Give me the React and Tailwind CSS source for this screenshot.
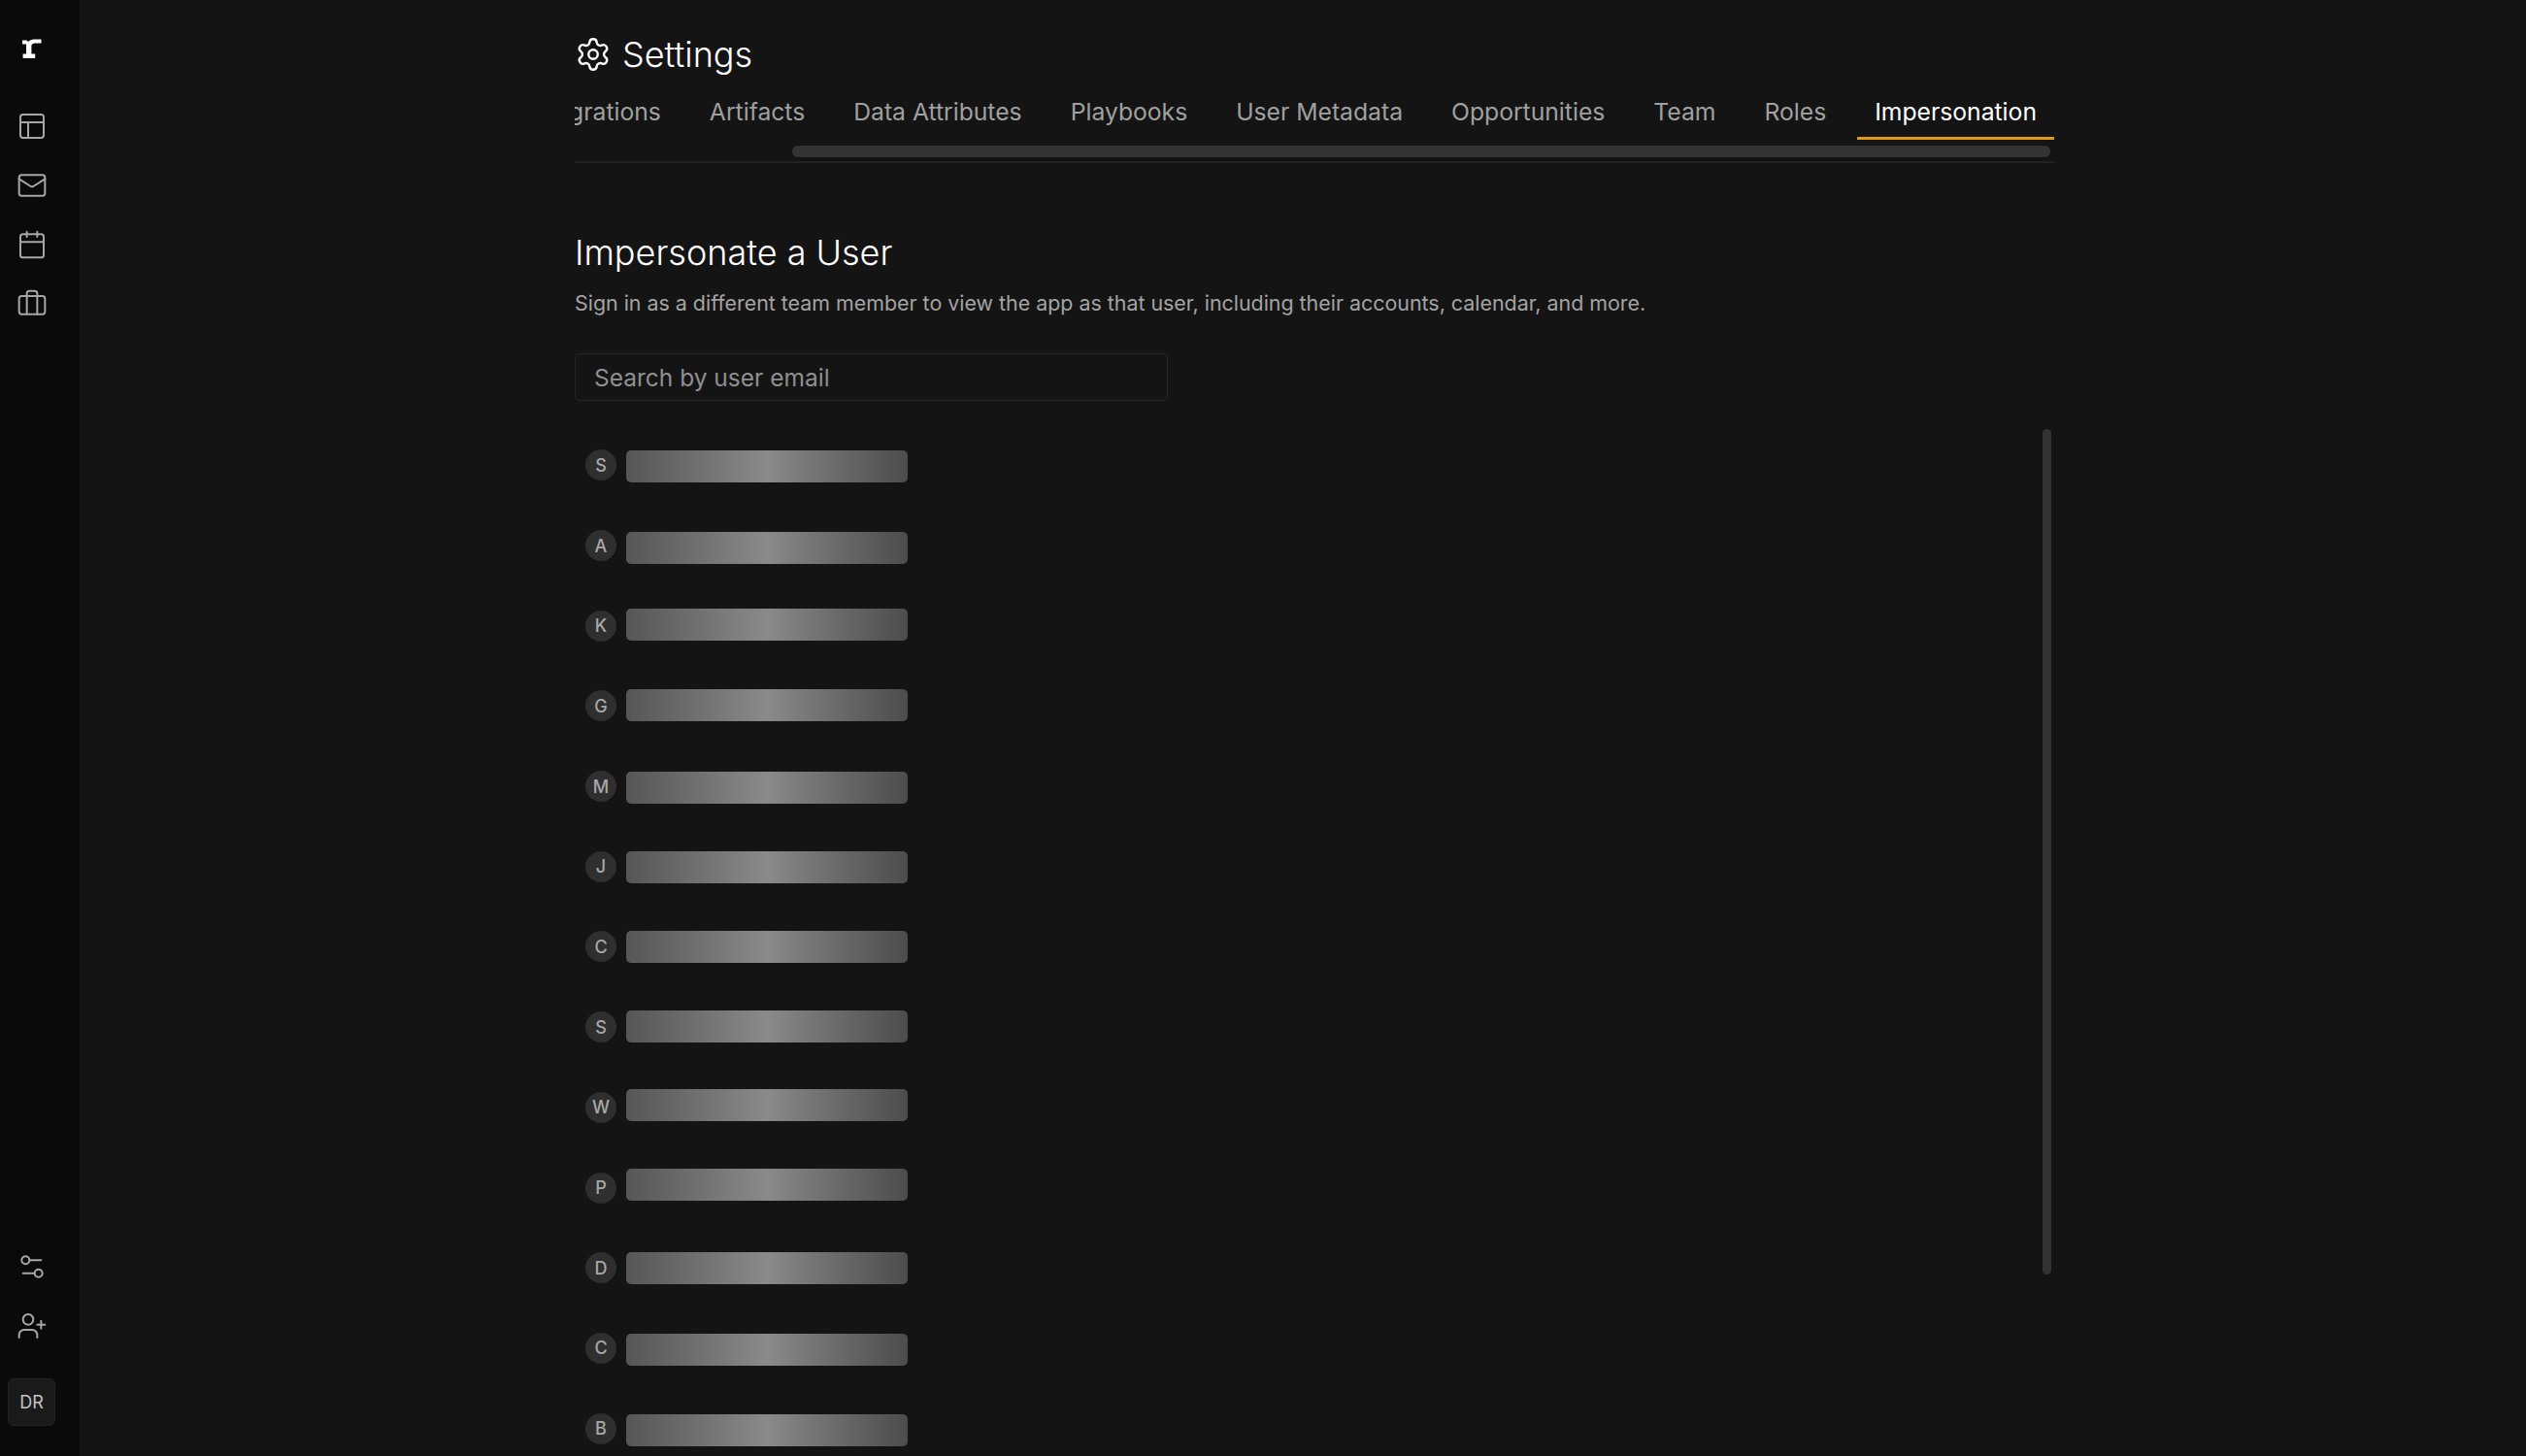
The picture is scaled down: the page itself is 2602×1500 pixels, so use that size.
import React from 'react';
import { PanelsTopLeft, Mail, Calendar, Briefcase, Settings2, UserPlus, Settings } from 'lucide-react';
import clsx from 'clsx';

const tabs = ['Integrations', 'Artifacts', 'Data Attributes', 'Playbooks', 'User Metadata', 'Opportunities', 'Team', 'Roles', 'Impersonation'];

const users = [
  { letter: 'S', shift: 'translate-y-[1px]' },
  { letter: 'A', shift: 'translate-y-[2px]' },
  { letter: 'K', shift: 'translate-y-[-1px]' },
  { letter: 'G', shift: 'translate-y-[-1px]' },
  { letter: 'M', shift: 'translate-y-[1px]' },
  { letter: 'J', shift: 'translate-y-[1px]' },
  { letter: 'C', shift: 'translate-y-0' },
  { letter: 'S', shift: 'translate-y-[-1px]' },
  { letter: 'W', shift: 'translate-y-[-2px]' },
  { letter: 'P', shift: 'translate-y-[-3px]' },
  { letter: 'D', shift: 'translate-y-0' },
  { letter: 'C', shift: 'translate-y-[2px]' },
  { letter: 'B', shift: 'translate-y-[2px]' },
];

function Logo() {
  return (
    <svg width="20" height="20" viewBox="0 0 20 20" fill="#fff">
      <path d="M0 1.5h4.5l1.5 1.6C7.5 1.5 9.5.6 12 .6h7.5v4H14c-2 0-3.6.6-4.6 1.8v9h3.8V20H.6v-4.6h3.4V5.6H0z" />
    </svg>
  );
}

function Sidebar() {
  const top = [PanelsTopLeft, Mail, Calendar, Briefcase];
  return (
    <aside className="flex h-full w-[82px] shrink-0 flex-col items-center justify-between bg-[#0a0a0a] pb-[31px] pr-[17px] pt-[40px]">
      <div className="flex flex-col items-center">
        <Logo />
        <div className="mt-[54px] flex flex-col items-center gap-[29px] text-[#a6a6a6]">
          {top.map((Icon, i) => <Icon key={i} size={32} strokeWidth={1.5} />)}
        </div>
      </div>
      <div className="flex flex-col items-center">
        <div className="flex flex-col items-center gap-[29px] text-[#a6a6a6]">
          <Settings2 size={32} strokeWidth={1.5} />
          <UserPlus size={32} strokeWidth={1.5} />
        </div>
        <div className="mt-[38px] flex h-[49px] w-[49px] items-center justify-center rounded-[6px] border border-[#222222] bg-[#1a1a1a] text-[18px] text-[#c4c4c4]">DR</div>
      </div>
    </aside>
  );
}

function Tabs() {
  return (
    <div className="border-b-2 border-[#222222] pb-[4px]">
      <div className="flex h-[64px] justify-end overflow-hidden pt-[6px]">
        {tabs.map((t) => (
          <div
            key={t}
            className={clsx(
              'ml-[14px] flex h-[58px] shrink-0 items-center border-b-[3px] px-[18px] pt-[4px] text-[24.7px]',
              t === 'Impersonation' ? 'border-[#e09a10] text-white' : 'border-transparent text-[#a0a0a0]',
            )}
          >
            {t}
          </div>
        ))}
      </div>
      <div className="ml-[224px] mr-[4px] mt-[6px] h-[12px] rounded-full bg-[#333333]" />
    </div>
  );
}

function UserRow({ letter, shift }) {
  return (
    <div className="flex h-[82.7px] items-center pl-[11px]">
      <div className="flex h-[32px] w-[32px] shrink-0 items-center justify-center rounded-full bg-[#2f2f2f] text-[18px] font-medium text-[#a8a8a8]">{letter}</div>
      <div className={clsx('ml-[10px] h-[33px] w-[290px] rounded-[5px] bg-gradient-to-r from-[#565656] via-[#8a8a8a] to-[#4c4c4c]', shift)} />
    </div>
  );
}

export default function App() {
  return (
    <div className="flex h-[1500px] overflow-hidden bg-[#141414] font-['Inter',sans-serif]">
      <Sidebar />
      <main className="ml-[510px] w-[1524px]">
        <div className="flex h-[80px] items-center gap-[11px] pt-[32px] text-white">
          <Settings size={38} strokeWidth={1.5} />
          <h1 className="text-[36px] leading-[50px] font-light">Settings</h1>
        </div>
        <Tabs />
        <h2 className="mt-[70px] text-[36px] leading-[44px] font-light text-white">Impersonate a User</h2>
        <p className="mt-[12px] text-[21.4px] leading-[36px] text-[#a3a3a3]">Sign in as a different team member to view the app as that user, including their accounts, calendar, and more.</p>
        <input
          placeholder="Search by user email"
          className="mt-[34px] block h-[49px] w-[611px] rounded-[5px] border border-[#262626] bg-transparent px-[19px] text-[24.5px] outline-none placeholder:text-[#8f8f8f]"
        />
        <div className="relative mt-[25px]">
          {users.map((u, i) => <UserRow key={i} {...u} />)}
          <div className="absolute right-[3px] top-[4px] h-[871px] w-[9px] rounded-full bg-[#333333]" />
        </div>
      </main>
    </div>
  );
}
